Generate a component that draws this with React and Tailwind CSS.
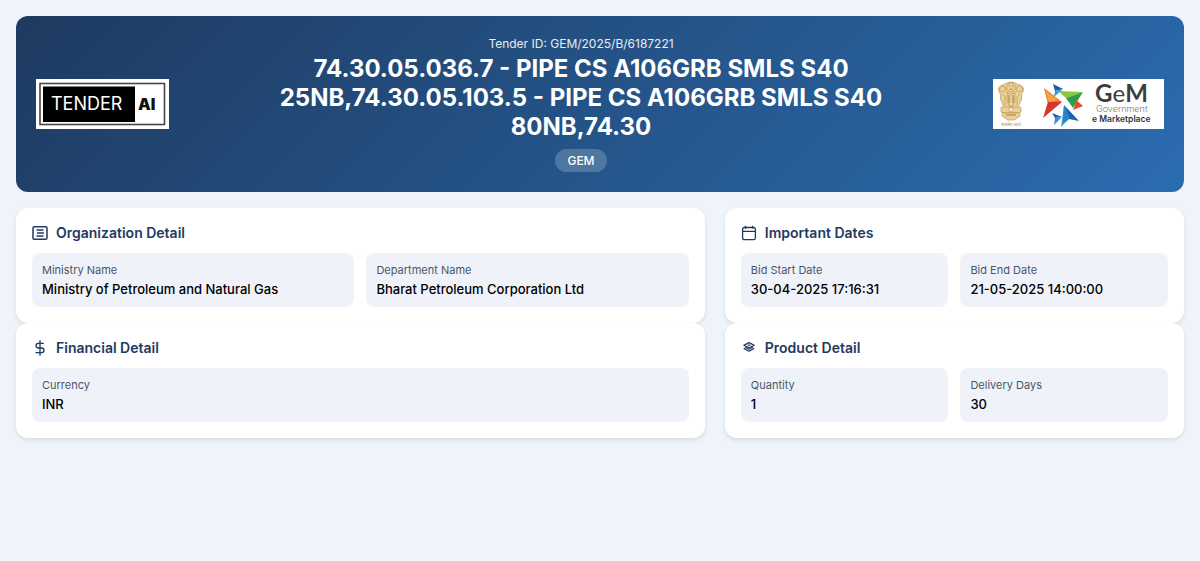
import React from "react";
import { FiDollarSign } from "react-icons/fi";

const organization = [
  { label: "Ministry Name", value: "Ministry of Petroleum and Natural Gas" },
  { label: "Department Name", value: "Bharat Petroleum Corporation Ltd" },
];

const dates = [
  { label: "Bid Start Date", value: "30-04-2025 17:16:31" },
  { label: "Bid End Date", value: "21-05-2025 14:00:00" },
];

const financial = [{ label: "Currency", value: "INR" }];

const product = [
  { label: "Quantity", value: "1" },
  { label: "Delivery Days", value: "30" },
];

const OrganizationIcon = () => (
  <svg viewBox="0 0 16 16" className="size-4" fill="none" stroke="currentColor" strokeWidth="1.5" aria-hidden="true">
    <rect x="1" y="1.7" width="14" height="12.6" rx="1.4" />
    <path d="M4.5 5h7M5 8h7M4.5 11h7" strokeWidth="1.4" />
  </svg>
);

const CalendarIcon = () => (
  <svg viewBox="0 0 16 16" className="size-4" fill="none" stroke="currentColor" strokeWidth="1.3" aria-hidden="true">
    <rect x="1.6" y="2.5" width="12.8" height="12.2" rx="1.8" />
    <path d="M1.6 6.3h12.8M4.5 0.8v3M11.5 0.8v3" />
  </svg>
);

const LayersIcon = () => (
  <svg viewBox="0 0 16 16" className="size-4" fill="none" stroke="currentColor" strokeWidth="1.2" strokeLinejoin="round" aria-hidden="true">
    <path d="M8 2.6 13.2 5.2 8 7.8 2.800 5.200z" />
    <path d="M2.800 8.400 8 11.200l5.200-2.800" />
    <path d="M4 7 8 9.200 12 7M6.500 5.200h3" />
  </svg>
);

const TenderLogo = () => (
  <svg viewBox="0 0 133 50" className="h-[50px] w-auto shrink-0" role="img" aria-label="Tender AI">
    <rect width="133" height="50" fill="#fff" />
    <rect x="4" y="4.5" width="124.5" height="41" fill="none" stroke="#4a4541" strokeWidth="1.6" />
    <rect x="7" y="7.5" width="92" height="35.5" fill="#000" />
    <text x="15" y="31" fill="#fff" fontFamily="Inter" fontSize="18" fontWeight="400">TENDER</text>
    <text x="102" y="31" fill="#111" fontFamily="Inter" fontSize="16" fontWeight="900">AI</text>
  </svg>
);

const GemLogo = () => (
  <svg viewBox="0 0 171 50" className="h-[50px] w-auto shrink-0" role="img" aria-label="GeM Government e Marketplace">
    <rect width="171" height="50" fill="#fff" />
    {/* Lion emblem */}
    <g fill="#e9cf98" stroke="#c09a52" strokeWidth="0.7">
      <path d="M12 5q6-4 12 0l4 1.5q4 2 2 6l-1.5 3q1 5-1.5 8l-2 5H11l-2-5q-2.5-3-1.5-8L6 12.5q-2-4 2-6z" />
      <circle cx="18" cy="8.5" r="4.5" />
      <circle cx="9.5" cy="10" r="3" />
      <circle cx="26.5" cy="10" r="3" />
      <path d="M14 13q4 4 8 0v8l-2 6h-4l-2-6zM9 15l3 3v8M27 15l-3 3v8" />
      <rect x="8" y="28" width="20" height="5.5" rx="1" />
      <circle cx="18" cy="30.7" r="2" fill="#fff3d8" />
      <path d="M10 34h16q3 3-2 5l-3 2h-6l-3-2q-5-2-2-5z" />
    </g>
    <path d="M16 7h1M19.5 7h1M16.5 10q1.5 1 3 0M16 16v8M20 16v8M13 36h10" fill="none" stroke="#946820" strokeWidth="0.8" />
    <text x="18" y="46.5" textAnchor="middle" fill="#b98b3c" fontFamily="Noto Sans" fontSize="4">सत्यमेव जयते</text>
    {/* Star */}
    <path d="M51 9l18 14-14 2z" fill="#f2762a" />
    <path d="M55 23h14L50 39z" fill="#d7352c" />
    <path d="M52 11l13 10-9 2z" fill="#f9a13a" />
    <path d="M90 13L65 12l8 7z" fill="#8cc63f" />
    <path d="M90 13L80 29l-7-10z" fill="#2f9e4b" />
    <path d="M71 26l-3 22 8-8z" fill="#36a6dc" />
    <path d="M71 26l15 16-10-2z" fill="#1b63ae" />
    <path d="M71 26l5 14-6 4z" fill="#2584c6" />
    <path d="M60 5l10 5-8 2z" fill="#1a5ba7" />
    <path d="M62 12l8-2-9 8z" fill="#3e9bd6" />
    <path d="M82 20l8 7-10 4 2-5z" fill="#e6492d" />
    <path d="M59 34l10 4-7 1z" fill="#1b63ae" />
    <path d="M62 39l7-1-8 8z" fill="#3e8dcc" />
    <text x="102" y="23" fill="#3d3d3f" fontFamily="Lato" fontSize="24" fontWeight="700">G<tspan fontWeight="400">e</tspan>M</text>
    <text x="103" y="33" fill="#77777a" fontFamily="Inter" fontSize="9" fontWeight="300">Government</text>
    <text x="99" y="43" fill="#333" fontFamily="Inter" fontSize="8.5" fontWeight="600">e Marketplace</text>
  </svg>
);

const DetailCard = ({ icon, title, items }) => (
  <section className="rounded-xl bg-white p-4 shadow-[0_2px_4px_rgba(0,0,0,0.1)]">
    <h2 className="mb-3 flex items-center gap-2 text-sm leading-[17px] font-semibold text-[#1e3a5f]">
      {icon}
      {title}
    </h2>
    <dl className="grid auto-cols-fr grid-flow-col gap-3">
      {items.map((item) => (
        <div key={item.label} className="rounded-lg bg-[#eff3f9] p-[10px]">
          <dt className="mb-1 text-[11px] leading-[14px] text-[#4a5568]">{item.label}</dt>
          <dd className="text-[13px] leading-4 font-medium text-black">{item.value}</dd>
        </div>
      ))}
    </dl>
  </section>
);

const App = () => {
  return (
    <div className="min-h-screen bg-[#eff3fa] p-4 font-[Inter,sans-serif]">
      {/* Header */}
      <header className="mb-4 flex items-center justify-between rounded-xl bg-[linear-gradient(135deg,#1e3a5f,#2b6cb0)] p-5 text-white">
        <TenderLogo />
        <div className="flex-1 px-10 text-center">
          <p className="mb-[3px] text-xs leading-[15px] text-white/90">Tender ID: GEM/2025/B/6187221</p>
          <h1 className="text-2xl leading-[29px] font-bold">
            74.30.05.036.7 - PIPE CS A106GRB SMLS S40 25NB,74.30.05.103.5 - PIPE CS A106GRB SMLS S40 80NB,74.30
          </h1>
          <span className="mt-2 inline-block rounded-full bg-white/20 px-3 py-1 align-top text-xs leading-[15px] font-medium">
            GEM
          </span>
        </div>
        <GemLogo />
      </header>

      {/* Details */}
      <main className="grid grid-cols-1 gap-x-5 sm:grid-cols-[3fr_2fr]">
        <DetailCard icon={<OrganizationIcon />} title="Organization Detail" items={organization} />
        <DetailCard icon={<CalendarIcon />} title="Important Dates" items={dates} />
        <DetailCard icon={<FiDollarSign className="size-4" aria-hidden="true" />} title="Financial Detail" items={financial} />
        <DetailCard icon={<LayersIcon />} title="Product Detail" items={product} />
      </main>
    </div>
  );
};

export default App;
